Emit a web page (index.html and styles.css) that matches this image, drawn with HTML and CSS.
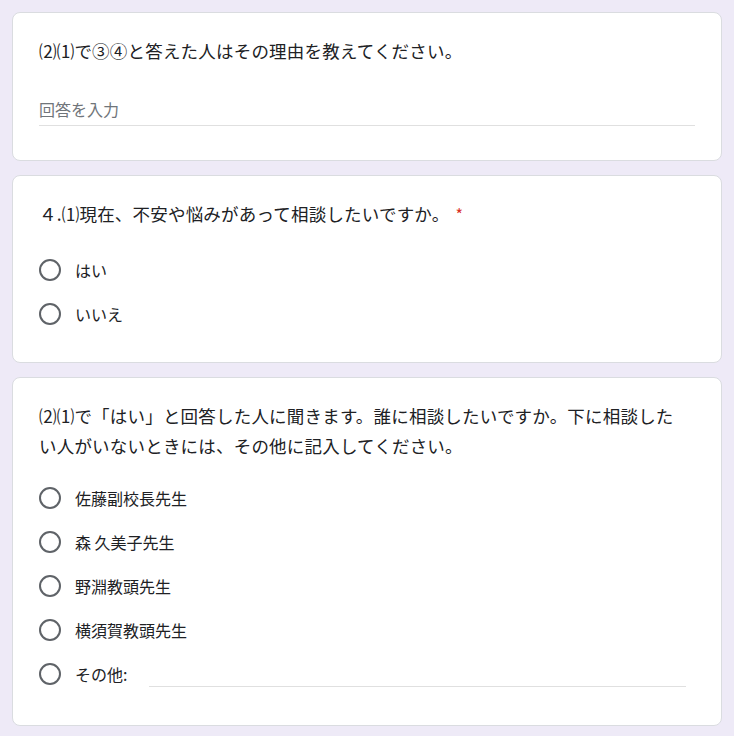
FILE: index.html
```html
<!DOCTYPE html>
<html lang="ja">
<head>
<meta charset="utf-8">
<title>フォーム</title>
<link rel="stylesheet" href="styles.css">
</head>
<body>
<main class="form">
  <section class="card card-text">
    <div class="title">⑵⑴で③④と答えた人はその理由を教えてください。</div>
    <div class="text-input"><span class="placeholder">回答を入力</span></div>
  </section>

  <section class="card">
    <div class="title">４.⑴現在、不安や悩みがあって相談したいですか。<span class="req">*</span></div>
    <div class="options">
      <div class="option"><span class="radio"></span><span class="label">はい</span></div>
      <div class="option"><span class="radio"></span><span class="label">いいえ</span></div>
    </div>
  </section>

  <section class="card card-long">
    <div class="title">⑵⑴で「はい」と回答した人に聞きます。誰に相談したいですか。下に相談したい人がいないときには、その他に記入してください。</div>
    <div class="options">
      <div class="option"><span class="radio"></span><span class="label">佐藤副校長先生</span></div>
      <div class="option"><span class="radio"></span><span class="label">森 久美子先生</span></div>
      <div class="option"><span class="radio"></span><span class="label">野淵教頭先生</span></div>
      <div class="option"><span class="radio"></span><span class="label">横須賀教頭先生</span></div>
      <div class="option"><span class="radio"></span><span class="label">その他:</span><span class="other-line"></span></div>
    </div>
  </section>
</main>
</body>
</html>
```
FILE: styles.css
```css
html, body {
  margin: 0;
  padding: 0;
}
body {
  background: #eeeaf7;
  font-family: "Noto Sans CJK JP", "Noto Sans", "Liberation Sans", sans-serif;
  color: #202124;
}
.form {
  display: flex;
  flex-direction: column;
  gap: 14px;
  padding: 12px 12px 0 12px;
}
.card {
  width: 710px;
  box-sizing: border-box;
  background: #ffffff;
  border: 1px solid #dadce0;
  border-radius: 8px;
  padding: 23px 26px 26px 26px;
}
.card-text {
  padding-bottom: 34px;
}
.card-long {
  padding-bottom: 29px;
}
.card-long .options {
  margin-top: 15px;
}
.title {
  font-size: 17.5px;
  letter-spacing: 0.2px;
  line-height: 30px;
  padding-right: 12px;
  color: #202124;
}
.req {
  color: #d93025;
  margin-left: 6px;
  font-size: 16px;
}
.text-input {
  margin-top: 31px;
  padding-bottom: 4px;
  border-bottom: 1px solid #e0e0e0;
  line-height: 24px;
}
.placeholder {
  font-size: 16px;
  color: #70757a;
}
.options {
  margin-top: 19px;
  display: flex;
  flex-direction: column;
}
.option {
  height: 44px;
  display: flex;
  align-items: center;
}
.radio {
  width: 22px;
  height: 22px;
  box-sizing: border-box;
  border: 2px solid #5f6368;
  border-radius: 50%;
  flex: none;
}
.label {
  margin-left: 14px;
  font-size: 16px;
  line-height: 24px;
  color: #202124;
}
.other-line {
  flex: 1;
  height: 26px;
  margin-left: 22px;
  margin-right: 9px;
  border-bottom: 1px solid #e0e0e0;
  box-sizing: border-box;
}
```
